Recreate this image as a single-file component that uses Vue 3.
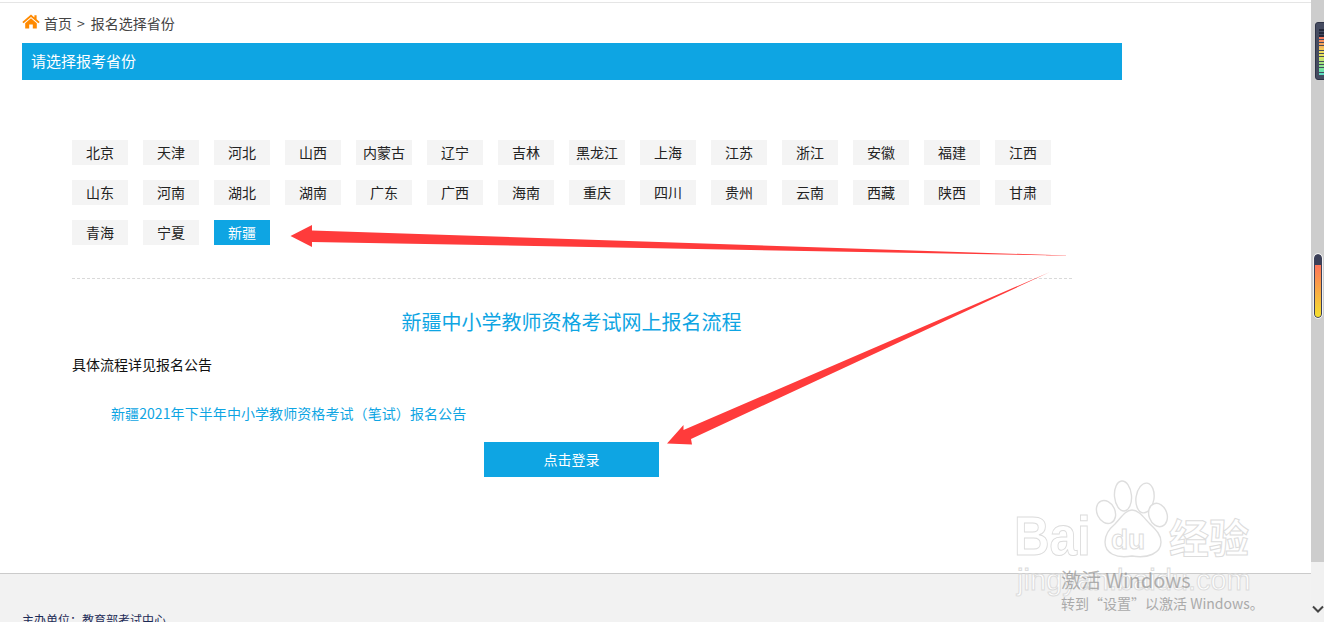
<template>
  <div class="page">
    <div class="main">
      <div class="content">
        <div class="crumbs">
          <svg class="home" width="18" height="15" viewBox="0 0 18 15">
            <path d="M9 0.5 L0.3 8 L1.6 9.2 L9 2.9 L16.4 9.2 L17.7 8 L14.6 5.3 V1.2 H12.4 V3.4 Z" fill="#ff8a00" />
            <path d="M9 4.3 L3.2 9.2 V14.6 H7.2 V10.4 H10.8 V14.6 H14.8 V9.2 Z" fill="#ff8a00" />
          </svg>
          <span>首页</span>
          <span class="sep">&gt;</span>
          <span>报名选择省份</span>
        </div>
        <div class="bar">请选择报考省份</div>
        <div class="inner">
          <div class="provinces">
            <a
              v-for="p in provinces"
              :key="p"
              :class="['prov', { active: p === current }]"
            >{{ p }}</a>
          </div>
          <div class="line"></div>
          <h2 class="title">新疆中小学教师资格考试网上报名流程</h2>
          <p class="desc">具体流程详见报名公告</p>
          <a class="notice">新疆2021年下半年中小学教师资格考试（笔试）报名公告</a>
          <div class="login-wrap">
            <a class="login">点击登录</a>
          </div>
        </div>
      </div>
      <div class="footer">
        <p>主办单位：教育部考试中心</p>
      </div>
    </div>

    <div class="scrollbar">
      <div class="thumb"></div>
      <div class="track">
        <svg width="12" height="8" viewBox="0 0 12 8">
          <path d="M1 1.5 L6 6.5 L11 1.5" fill="none" stroke="#444" stroke-width="2" />
        </svg>
      </div>
    </div>

    <!-- speedometer widget sitting on the scrollbar -->
    <div class="meter">
      <i v-for="(c, i) in meterColors" :key="i" :style="{ background: c }"></i>
    </div>
    <div class="gauge"><div class="gauge-fill"></div></div>

    <!-- red annotation arrows -->
    <svg class="arrows" width="1324" height="622" viewBox="0 0 1324 622">
      <path d="M290.5 236 L312 225 L312 230.5 L1074 255.8 L312 242 L312 247 Z" fill="#ff3b3b" />
      <path d="M667 443.5 L683.5 425 L683.5 430 L1050 272 L691 439 L692 444.5 Z" fill="#ff3b3b" />
    </svg>

    <!-- watermark -->
    <div class="wm">
      <span class="wm-bai">Bai</span>
      <svg class="wm-paw" width="80" height="82" viewBox="0 0 80 82">
        <g fill="#fff" stroke="#dedede" stroke-width="1.4">
          <ellipse cx="29" cy="18" rx="8.5" ry="15" transform="rotate(-5 29 18)" />
          <ellipse cx="51" cy="20" rx="9" ry="15" transform="rotate(8 51 20)" />
          <ellipse cx="12" cy="34" rx="9" ry="12" transform="rotate(-25 12 34)" />
          <ellipse cx="64" cy="37" rx="9" ry="12" transform="rotate(-20 64 37)" />
          <path d="M38 32 C31 32 27 40 21 46 C15 51 11 56 11 64 C11 75 22 81 38 78 C54 81 67 75 67 64 C67 56 61 51 56 46 C50 40 45 32 38 32 Z" />
        </g>
      </svg>
      <span class="wm-du">du</span>
      <span class="wm-jy">经验</span>
      <span class="wm-url">jingyan.baidu.com</span>
    </div>

    <!-- windows activation notice -->
    <div class="activate">
      <div class="a1">激活 Windows</div>
      <div class="a2">转到“设置”以激活 Windows。</div>
    </div>
  </div>
</template>

<script setup>
const provinces = [
  '北京', '天津', '河北', '山西', '内蒙古', '辽宁', '吉林', '黑龙江', '上海', '江苏', '浙江', '安徽', '福建', '江西',
  '山东', '河南', '湖北', '湖南', '广东', '广西', '海南', '重庆', '四川', '贵州', '云南', '西藏', '陕西', '甘肃',
  '青海', '宁夏', '新疆'
]
const current = '新疆'

const meterColors = [
  '#23283a', '#23283a', '#23283a', '#f47a5c', '#f58f5c', '#f5a45c', '#f5b85c', '#f2c95c', '#f0dc5c', '#e8e45e',
  '#d6e468', '#bfe474', '#a6e480', '#8fe48e', '#7ae49e', '#6ae0ae', '#5edcc0'
]
</script>

<style>
html, body {
  margin: 0;
  overflow: hidden;
}
</style>

<style scoped>
.page {
  position: relative;
  display: flex;
  width: 1324px;
  height: 622px;
  overflow: hidden;
  background: #fff;
  font-family: "Noto Sans CJK SC", "Liberation Sans", sans-serif;
  font-size: 14px;
}

.main {
  width: 1311px;
  display: flex;
  flex-direction: column;
}

.content {
  height: 571px;
  margin-top: 2px;
  border-top: 1px solid #e5e5e5;
  box-sizing: border-box;
  padding-left: 22px;
  flex-shrink: 0;
}

.crumbs {
  display: flex;
  align-items: center;
  height: 40px;
  color: #444;
  line-height: 40px;
}

.home {
  margin-right: 4px;
  margin-top: -3px;
}

.sep {
  margin: 0 6px 0 5px;
}

.bar {
  width: 1100px;
  height: 37px;
  box-sizing: border-box;
  padding-left: 9px;
  background: #0ea5e3;
  color: #fff;
  font-size: 15px;
  line-height: 36px;
}

.inner {
  width: 1000px;
  margin-left: 50px;
  padding-top: 60px;
}

.provinces {
  display: flex;
  flex-wrap: wrap;
  gap: 15px 15px;
}

.prov {
  width: 56px;
  height: 25px;
  background: #f4f4f4;
  color: #222;
  text-align: center;
  line-height: 25px;
}

.prov.active {
  background: #0ea5e3;
  color: #fff;
}

.line {
  margin-top: 33px;
  border-top: 1px dashed #d9d9d9;
}

.title {
  margin: 28px 1px 0 0;
  color: #0ea5e3;
  font-size: 20px;
  font-weight: normal;
  line-height: 30px;
  text-align: center;
}

.desc {
  margin: 17px 0 0;
  color: #111;
  line-height: 20px;
}

.notice {
  display: block;
  margin: 29px 0 0 39px;
  color: #0ea5e3;
  letter-spacing: 0.08px;
  line-height: 20px;
}

.login-wrap {
  display: flex;
  justify-content: center;
  margin-top: 19px;
  padding-right: 1px;
}

.login {
  width: 175px;
  height: 35px;
  background: #0ea5e3;
  color: #fff;
  font-size: 14px;
  line-height: 35px;
  text-align: center;
}

.footer {
  flex: 1;
  border-top: 1px solid #cbcbcb;
  background: #f2f2f2;
  padding-left: 22px;
  color: #1c2a56;
  font-size: 12px;
}

.footer p {
  margin: 39px 0 0;
  line-height: 14px;
}

.scrollbar {
  width: 13px;
  display: flex;
  flex-direction: column;
}

.thumb {
  height: 562px;
  background: #cdcdcd;
}

.track {
  flex: 1;
  background: #f1f1f1;
  display: flex;
  justify-content: center;
  align-items: flex-end;
  padding-bottom: 9px;
}

.meter {
  position: absolute;
  left: 1315px;
  top: 22px;
  width: 12px;
  height: 58px;
  box-sizing: border-box;
  padding: 6px 0 0 3px;
  border: 1px solid #2e3346;
  border-radius: 3px;
  background: #454b60;
  display: flex;
  flex-direction: column;
  gap: 0.75px;
}

.meter i {
  display: block;
  width: 5px;
  height: 2px;
}

.gauge {
  position: absolute;
  left: 1314px;
  top: 254px;
  width: 8px;
  height: 64px;
  box-sizing: border-box;
  padding-top: 10px;
  border-radius: 4px;
  outline: 1px solid #f2f2f2;
  border: 1px solid #3c4058;
  background: #3c4058;
  overflow: hidden;
}

.gauge-fill {
  height: 100%;
  background: linear-gradient(#ff7559, #f4e02e);
}

.arrows {
  position: absolute;
  left: 0;
  top: 0;
}

.wm {
  position: absolute;
  left: 1010px;
  top: 478px;
  width: 250px;
  height: 130px;
  color: #fff;
  -webkit-text-stroke: 1px #dcdcdc;
  font-family: "Liberation Sans", "Noto Sans CJK SC", sans-serif;
}

.wm-bai {
  position: absolute;
  left: 4px;
  top: 28px;
  font-size: 56px;
  font-weight: bold;
  line-height: 60px;
  transform: scaleX(0.88);
  transform-origin: left center;
}

.wm-paw {
  position: absolute;
  left: 84px;
  top: 0;
}

.wm-du {
  position: absolute;
  left: 101px;
  top: 47px;
  font-size: 28px;
  font-weight: bold;
  line-height: 30px;
}

.wm-jy {
  position: absolute;
  left: 159px;
  top: 35px;
  font-size: 40px;
  font-family: "Noto Sans CJK SC", sans-serif;
  font-weight: bold;
  line-height: 46px;
}

.wm-url {
  position: absolute;
  left: 7px;
  top: 82px;
  font-size: 29px;
  line-height: 40px;
  white-space: nowrap;
}

.activate {
  position: absolute;
  left: 1061px;
  top: 567px;
}

.a1 {
  font-size: 20px;
  line-height: 26px;
  color: rgba(130, 130, 130, 0.6);
}

.a2 {
  font-size: 14px;
  line-height: 20px;
  color: #aaa;
}
</style>
